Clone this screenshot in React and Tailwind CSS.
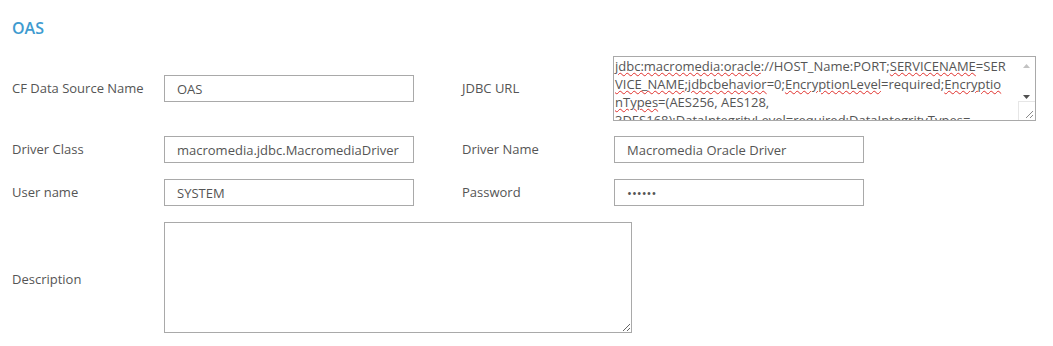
import React from 'react';

const Typo = ({ children }) => (
  <span className="underline decoration-wavy decoration-[#e0302c] decoration-1 underline-offset-[1px]">
    {children}
  </span>
);

const TextInput = ({ value, type = 'text' }) => (
  <input
    type={type}
    readOnly
    value={value}
    className="w-[250px] h-[27px] border border-[#a9a9a9] bg-white px-3 text-[13px] text-[#555] outline-none font-['Open_Sans',sans-serif]"
  />
);

const Label = ({ children, className = '' }) => (
  <div className={`shrink-0 text-[13px] text-[#555] ${className}`}>{children}</div>
);

const ResizeGrip = () => (
  <svg width="9" height="9" viewBox="0 0 9 9" className="block">
    <path d="M8 1 L1 8 M8 5 L5 8" stroke="#8a8a8a" strokeWidth="1" />
  </svg>
);

const JdbcUrlBox = () => (
  <div className="flex w-[423px] h-[65px] border border-[#a9a9a9] bg-white overflow-hidden">
    <div className="flex-1 overflow-hidden pl-px text-[13px] leading-[18px] text-[#555] whitespace-nowrap">
      <div>
        <Typo>jdbc:macromedia:oracle</Typo>://HOST_Name:PORT;<Typo>SERVICENAME</Typo>=SER
      </div>
      <div>
        <Typo>VICE_NAME</Typo>;<Typo>jdbcbehavior</Typo>=0;<Typo>EncryptionLevel</Typo>=required;<Typo>Encryptio</Typo>
      </div>
      <div>
        <Typo>nTypes</Typo>=(AES256, AES128,
      </div>
      <div>3DES168);DataIntegrityLevel=required;DataIntegrityTypes=</div>
    </div>
    <div className="w-[17px] shrink-0 flex flex-col">
      <div className="flex h-[14px] items-center justify-center pt-1">
        <svg width="7" height="4" viewBox="0 0 7 4">
          <path d="M0 4 L3.5 0 L7 4 Z" fill="#c2c2c2" />
        </svg>
      </div>
      <div className="flex h-[30px] items-end justify-center pb-[2px]">
        <svg width="7" height="4" viewBox="0 0 7 4">
          <path d="M0 0 L7 0 L3.5 4 Z" fill="#505050" />
        </svg>
      </div>
      <div className="flex-1 border-t border-l border-[#e6e6e6] flex items-end justify-end pr-px pb-px">
        <ResizeGrip />
      </div>
    </div>
  </div>
);

export default function App() {
  return (
    <div className="w-[1053px] h-[346px] bg-white pl-3 pt-[17px] font-['Open_Sans',sans-serif] text-[#555]">
      <h2 className="text-[16px] leading-[22px] font-semibold text-[#3e9bd0]">OAS</h2>

      <div className="mt-[17px] flex items-center h-[65px]">
        <Label className="w-[152px]">CF Data Source Name</Label>
        <TextInput value="OAS" />
        <Label className="w-[151px] ml-[48px]">JDBC URL</Label>
        <JdbcUrlBox />
      </div>

      <div className="mt-[15px] flex items-center">
        <Label className="w-[152px]">Driver Class</Label>
        <TextInput value="macromedia.jdbc.MacromediaDriver" />
        <Label className="w-[152px] ml-[48px]">Driver Name</Label>
        <TextInput value="Macromedia Oracle Driver" />
      </div>

      <div className="mt-[16px] flex items-center">
        <Label className="w-[152px]">User name</Label>
        <TextInput value="SYSTEM" />
        <Label className="w-[152px] ml-[48px]">Password</Label>
        <TextInput type="password" value="secret" />
      </div>

      <div className="mt-[16px] flex items-center">
        <Label className="w-[152px] pt-[5px]">Description</Label>
        <textarea
          readOnly
          className="block w-[468px] h-[111px] border border-[#a9a9a9] bg-white outline-none resize"
        />
      </div>
    </div>
  );
}
